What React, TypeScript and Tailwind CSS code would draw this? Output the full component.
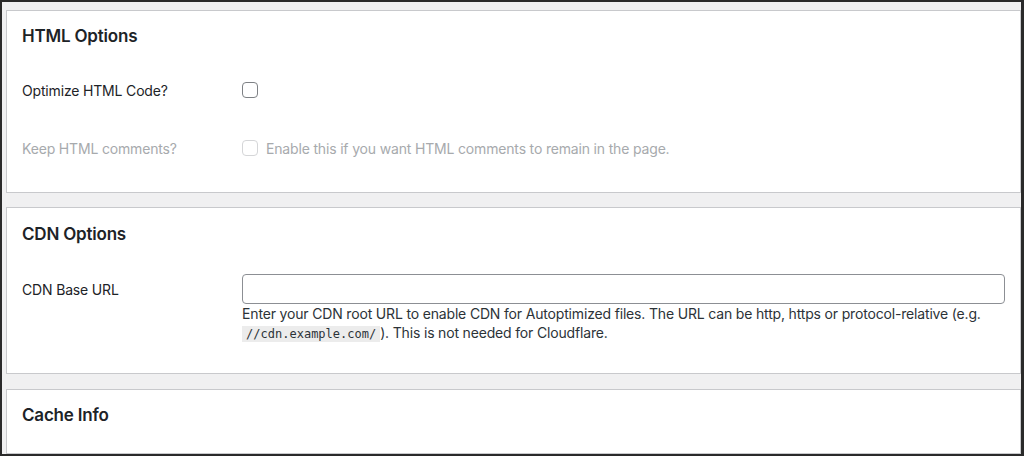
import React from 'react';

const font = { fontFamily: 'Inter, "Noto Sans", sans-serif' };

const Checkbox = ({ disabled = false }: { disabled?: boolean }) => (
  <span
    className={`inline-block w-4 h-4 rounded-[4px] border bg-white shrink-0 ${
      disabled ? 'border-[#d5d6d8]' : 'border-[#7e8185]'
    }`}
  />
);

const Card = ({ children, className = '' }: { children: React.ReactNode; className?: string }) => (
  <section className={`bg-white border border-[#c8c9cc] px-[15px] ${className}`}>{children}</section>
);

const Title = ({ children, h }: { children: React.ReactNode; h: string }) => (
  <h2 className={`flex items-center pt-1 text-[17px] font-semibold tracking-[-0.2px] text-[#1d2327] ${h}`}>
    {children}
  </h2>
);

export default function App() {
  return (
    <div
      className="w-[1024px] h-[456px] overflow-hidden bg-[#f0f0f1] border-t-2 border-l-2 border-r-[3px] border-b-2 border-[#2a2a2a] pt-2 pl-1 flex flex-col tracking-[-0.17px]"
      style={font}
    >
      <Card className="h-[183px] shrink-0">
        <Title h="h-[48px]">HTML Options</Title>
        <div className="flex items-center h-[62px] text-[14px] text-[#1d2327]">
          <div className="w-[220px]">Optimize HTML Code?</div>
          <Checkbox />
        </div>
        <div className="flex items-center h-[54px] text-[14px] text-[#a7aaad]">
          <div className="w-[220px]">Keep HTML comments?</div>
          <Checkbox disabled />
          <span className="ml-2">Enable this if you want HTML comments to remain in the page.</span>
        </div>
      </Card>

      <Card className="h-[167px] shrink-0 mt-[14px]">
        <Title h="h-[50px]">CDN Options</Title>
        <div className="flex pt-4 text-[14px] text-[#1d2327]">
          <div className="w-[221px] h-[30px] flex items-center">CDN Base URL</div>
          <div className="w-[766px]">
            <input
              type="text"
              className="block w-full h-[30px] rounded-[4px] border border-[#8c8f94] bg-white outline-none px-2"
            />
            <p className="leading-[19px] text-[#2c3338]">
              Enter your CDN root URL to enable CDN for Autoptimized files. The URL can be http, https or
              protocol-relative (e.g.{' '}
              <code
                className="bg-[#ececec] px-1 py-[1px] text-[12px] tracking-normal text-[#2c3338]"
                style={{ fontFamily: '"DejaVu Sans Mono", monospace' }}
              >
                //cdn.example.com/
              </code>
              ). This is not needed for Cloudflare.
            </p>
          </div>
        </div>
      </Card>

      <Card className="flex-1 mt-[15px]">
        <Title h="h-[48px]">Cache Info</Title>
      </Card>
    </div>
  );
}
